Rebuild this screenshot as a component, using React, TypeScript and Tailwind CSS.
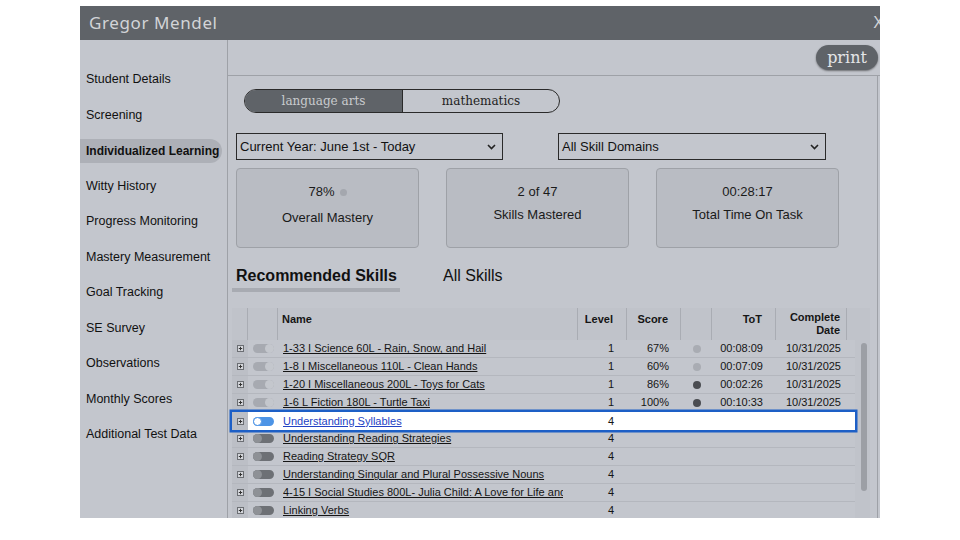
import React from 'react';

const sideItems = [
  'Student Details',
  'Screening',
  'Individualized Learning',
  'Witty History',
  'Progress Monitoring',
  'Mastery Measurement',
  'Goal Tracking',
  'SE Survey',
  'Observations',
  'Monthly Scores',
  'Additional Test Data',
];

type Row = {
  name: string;
  level: string;
  score?: string;
  dot?: 'light' | 'dark';
  tot?: string;
  date?: string;
  toggle: 'done' | 'on' | 'off';
  selected?: boolean;
};

const rows: Row[] = [
  { name: '1-33 I Science 60L - Rain, Snow, and Hail', level: '1', score: '67%', dot: 'light', tot: '00:08:09', date: '10/31/2025', toggle: 'done' },
  { name: '1-8 I Miscellaneous 110L - Clean Hands', level: '1', score: '60%', dot: 'light', tot: '00:07:09', date: '10/31/2025', toggle: 'done' },
  { name: '1-20 I Miscellaneous 200L - Toys for Cats', level: '1', score: '86%', dot: 'dark', tot: '00:02:26', date: '10/31/2025', toggle: 'done' },
  { name: '1-6 L Fiction 180L - Turtle Taxi', level: '1', score: '100%', dot: 'dark', tot: '00:10:33', date: '10/31/2025', toggle: 'done' },
  { name: 'Understanding Syllables', level: '4', toggle: 'on', selected: true },
  { name: 'Understanding Reading Strategies', level: '4', toggle: 'off' },
  { name: 'Reading Strategy SQR', level: '4', toggle: 'off' },
  { name: 'Understanding Singular and Plural Possessive Nouns', level: '4', toggle: 'off' },
  { name: '4-15 I Social Studies 800L- Julia Child: A Love for Life and', level: '4', toggle: 'off' },
  { name: 'Linking Verbs', level: '4', toggle: 'off' },
];

const cols = 'grid grid-cols-[16px_30px_300px_49px_54px_31px_64px_71px_8px]';

function Chevron() {
  return (
    <svg width="9" height="6" viewBox="0 0 9 6" className="shrink-0">
      <polyline points="1,1 4.5,4.5 8,1" fill="none" stroke="#222" strokeWidth="1.6" />
    </svg>
  );
}

function Expander() {
  return (
    <svg width="7" height="7" viewBox="0 0 7 7">
      <rect x="0.5" y="0.5" width="6" height="6" fill="#d4d6db" stroke="#6b6e73" strokeWidth="1" />
      <line x1="3.5" y1="1.8" x2="3.5" y2="5.2" stroke="#333" strokeWidth="1" />
      <line x1="1.8" y1="3.5" x2="5.2" y2="3.5" stroke="#333" strokeWidth="1" />
    </svg>
  );
}

function Toggle({ kind }: { kind: Row['toggle'] }) {
  if (kind === 'done') {
    return (
      <div className="w-[21px] h-[9px] rounded-full bg-[#a7aab1] flex justify-end">
        <div className="w-[9px] h-[9px] rounded-full bg-[#c4c7cd]" />
      </div>
    );
  }
  if (kind === 'on') {
    return (
      <div className="w-[21px] h-[9px] rounded-full bg-[#4d94e6] flex justify-start">
        <div className="w-[9px] h-[9px] rounded-full bg-white border border-[#4d94e6]" />
      </div>
    );
  }
  return (
    <div className="w-[21px] h-[9px] rounded-full bg-[#6d7075] flex justify-start">
      <div className="w-[9px] h-[9px] rounded-full bg-[#8e9196]" />
    </div>
  );
}

function StatCard({ top, label, dot }: { top: string; label: string; dot?: boolean }) {
  return (
    <div className="w-[183px] h-[80px] rounded-[4px] bg-[#b9bcc3] border border-[#9ea1a7] flex flex-col items-center pt-[14px] text-[13px] text-[#1a1a1a]">
      <div className="flex items-center gap-[5px] h-[18px]">
        <span>{top}</span>
        {dot && <span className="w-[7px] h-[7px] rounded-full bg-[#a4a7ae]" />}
      </div>
      <div className={dot ? 'mt-[7px]' : 'mt-[4px]'}>{label}</div>
    </div>
  );
}

export default function App() {
  return (
    <div
      className="w-[960px] h-[540px] bg-white overflow-hidden"
      style={{ fontFamily: '"Liberation Sans", Arial, sans-serif' }}
    >
      <div className="ml-[80px] mt-[6px] w-[800px] h-[512px] overflow-hidden flex flex-col bg-[#c3c6cd]">
        {/* title bar */}
        <div className="h-[34px] shrink-0 bg-[#5f6368] flex items-center justify-between pl-[9px]">
          <span
            className="text-[17px] text-[#d2d4d7] tracking-[0.6px]"
            style={{ fontFamily: '"Noto Sans", sans-serif' }}
          >
            Gregor Mendel
          </span>
          <span className="text-[16px] text-[#d2d4d7] mr-[-4px]">X</span>
        </div>

        <div className="flex flex-1 min-h-0">
          {/* sidebar */}
          <div className="w-[148px] shrink-0 border-r border-[#9ea1a7] pt-[22px]">
            {sideItems.map((item) => {
              const active = item === 'Individualized Learning';
              return (
                <div key={item} className="h-[35.5px] flex items-center">
                  <span
                    className={
                      'h-[24px] w-[142px] flex items-center pl-[6px] rounded-r-full text-[#111] whitespace-nowrap ' +
                      (active ? 'bg-[#adb0b7] font-bold text-[12px]' : 'text-[12.5px]')
                    }
                  >
                    {item}
                  </span>
                </div>
              );
            })}
          </div>

          {/* main */}
          <div className="flex-1 flex flex-col min-w-0">
            <div className="h-[36px] shrink-0 border-b border-[#9ea1a7] flex items-center justify-end">
              <button
                className="w-[62px] h-[25px] rounded-full bg-[#5f6368] text-[#e4e5e7] text-[16px] leading-none shadow-[0_1px_2px_rgba(0,0,0,0.45)] mr-[2px]"
                style={{ fontFamily: '"DejaVu Serif", serif' }}
              >
                print
              </button>
            </div>

            <div className="flex-1 min-h-0 w-[650px] border-r border-[#9ea1a7] pl-[4px] overflow-hidden">
              {/* subject switch */}
              <div
                className="ml-[12px] mt-[13px] w-[316px] h-[24px] rounded-full border border-[#2a2a2a] overflow-hidden flex text-[12px]"
                style={{ fontFamily: '"DejaVu Serif", serif' }}
              >
                <div className="w-[158px] bg-[#5f6368] text-[#c9cbce] flex items-center justify-center border-r border-[#2a2a2a]">
                  language arts
                </div>
                <div className="flex-1 text-[#222] flex items-center justify-center">mathematics</div>
              </div>

              {/* filters */}
              <div className="flex ml-[4px] mt-[20px] gap-[55px]">
                <div className="w-[267px] h-[27px] border border-[#2a2a2a] flex items-center justify-between pl-[3px] pr-[6px] text-[13px] text-[#111]">
                  <span>Current Year: June 1st - Today</span>
                  <Chevron />
                </div>
                <div className="w-[268px] h-[27px] border border-[#2a2a2a] flex items-center justify-between pl-[3px] pr-[6px] text-[13px] text-[#111]">
                  <span>All Skill Domains</span>
                  <Chevron />
                </div>
              </div>

              {/* stats */}
              <div className="flex ml-[4px] mt-[8px] gap-[27px]">
                <StatCard top="78%" label="Overall Mastery" dot />
                <StatCard top="2 of 47" label="Skills Mastered" />
                <StatCard top="00:28:17" label="Total Time On Task" />
              </div>

              {/* tabs */}
              <div className="flex items-end mt-[19px]">
                <div className="w-[168px] h-[25px] border-b-[4px] border-[#a8abb2] pl-[4px] text-[16px] font-bold text-[#111] leading-[18px] whitespace-nowrap">
                  Recommended Skills
                </div>
                <div className="ml-[43px] h-[25px] text-[16px] text-[#111] leading-[18px]">All Skills</div>
              </div>

              {/* table */}
              <div className="mt-[16px] w-[638px] text-[11px] text-[#151515]">
                <div className={cols + ' h-[32px] bg-[#c0c3ca] font-bold grid-cols-[16px_30px_300px_49px_54px_31px_64px_71px_23px]'}>
                  <div className="border-r border-[#a9acb3]" />
                  <div className="border-r border-[#a9acb3]" />
                  <div className="border-r border-[#a9acb3] pl-[4px] pt-[3px]">Name</div>
                  <div className="border-r border-[#a9acb3] text-right pr-[13px] pt-[3px]">Level</div>
                  <div className="border-r border-[#a9acb3] text-right pr-[12px] pt-[3px]">Score</div>
                  <div className="border-r border-[#a9acb3]" />
                  <div className="border-r border-[#a9acb3] text-right pr-[13px] pt-[3px]">ToT</div>
                  <div className="border-r border-[#a9acb3] text-right pr-[6px] pt-[3px] leading-[13px]">
                    Complete
                    <br />
                    Date
                  </div>
                  <div />
                </div>

                <div className="flex">
                  <div className="w-[623px]">
                    {rows.map((r) => (
                      <div
                        key={r.name}
                        className={
                          cols +
                          ' h-[18px] items-center ' +
                          (r.selected
                            ? 'bg-white ring-[2.5px] ring-[#1d5fc6] relative'
                            : 'border-b border-[#b4b7be]')
                        }
                      >
                        <div className="flex items-center justify-center h-full bg-[#bcbfc6]">
                          <Expander />
                        </div>
                        <div className="flex items-center justify-center">
                          <Toggle kind={r.toggle} />
                        </div>
                        <div className="pl-[5px]">
                          <div className="w-[280px] whitespace-nowrap overflow-hidden">
                            <span className={'underline ' + (r.selected ? 'text-[#2342c4]' : '')}>{r.name}</span>
                          </div>
                        </div>
                        <div className="text-right pr-[13px]">{r.level}</div>
                        <div className="text-right pr-[12px]">{r.score}</div>
                        <div className="flex justify-center">
                          {r.dot && (
                            <span
                              className={
                                'w-[8px] h-[8px] rounded-full ' +
                                (r.dot === 'dark' ? 'bg-[#4a4c51]' : 'bg-[#a9acb3]')
                              }
                            />
                          )}
                        </div>
                        <div className="text-right pr-[13px]">{r.tot}</div>
                        <div className="text-right pr-[6px]">{r.date}</div>
                        <div />
                      </div>
                    ))}
                  </div>
                  <div className="w-[15px] bg-[#c0c3ca] pt-[3px] flex justify-center pl-[2px]">
                    <div className="w-[6px] h-[148px] rounded-full bg-[#9c9fa5]" />
                  </div>
                </div>
              </div>
            </div>
          </div>
        </div>
      </div>
    </div>
  );
}
